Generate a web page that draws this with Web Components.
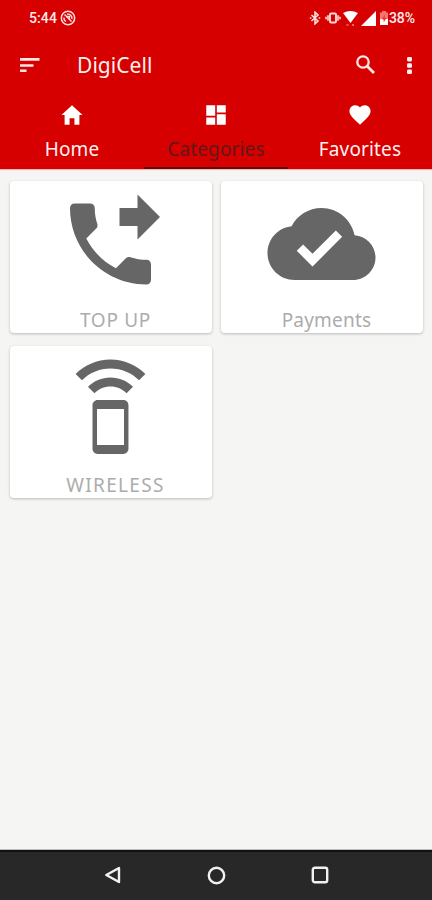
<!DOCTYPE html>
<html lang="en"><head><meta charset="utf-8"><title>DigiCell</title>
<style>html,body{margin:0;height:100%;overflow:hidden}body{font-family:"Noto Sans","Open Sans",sans-serif}</style></head>
<body><digi-app></digi-app>
<script>
const define = (name, html) => {
  const t = document.createElement('template');
  t.innerHTML = html;
  customElements.define(name, class extends HTMLElement {
    constructor() { super(); this.attachShadow({mode: 'open'}).append(t.content.cloneNode(true)); }
  });
};

define('status-bar', `<style>
:host{display:flex;height:36px;box-sizing:border-box;padding:0 16px 0 29px;align-items:center;color:#ffeceb;font:500 14px Roboto,sans-serif}
svg{display:block;flex:none}.time{width:29px;white-space:nowrap;letter-spacing:.1px}
.right{margin-left:auto;display:flex;align-items:center}.pct{width:27px;white-space:nowrap;letter-spacing:-.1px}
</style><span class="time">5:44</span>
<svg style="margin-left:2px" width="16" height="16" viewBox="0 0 16 16" fill="none" stroke="#ffdedb"><circle cx="8" cy="8" r="6.700" stroke-width="1.500"/><path d="M4.500 4.500l7 7M6 11.500a4 4 0 0 1-2-4M7 4.200a4 4 0 0 1 4.800 4.800" stroke-width="1.400"/><path d="M6.500 6.500h3v3" stroke-width="1.300"/></svg>
<div class="right">
<svg width="12" height="14" viewBox="0 0 12 14" fill="none" stroke="#ffe2e0" stroke-width="1.600"><path d="M2.500 4l6.500 6-3 2.800V1.200L9 4l-6.500 6"/><path d="M.8 7h1.600M9.600 7h1.600"/></svg>
<svg style="margin-left:4px" width="16" height="14" viewBox="0 0 16 14" fill="none" stroke="#ffd9d6" stroke-width="1.900"><rect x="5" y="2.500" width="6" height="9" rx="1"/><path d="M3 4.200v5.600M13 4.200v5.600M1 5.700v2.600M15 5.700v2.600" stroke-width="1.600"/></svg>
<svg style="margin-left:2px" width="15" height="17" viewBox="0 0 15 17"><path d="M0 3Q7.500-1 15 3L7.500 13z" fill="#fff"/><path d="M3.500 14l2 2M5.500 14l-2 2M9 14l2 2M11 14l-2 2" stroke="#ff6b62" stroke-width=".9"/></svg>
<svg style="margin-left:3px" width="15" height="15" viewBox="0 0 15 15"><path d="M15 0v15H0z" fill="#fff"/></svg>
<svg style="margin-left:4px" width="8" height="14" viewBox="0 0 8 14"><path d="M2 0h4v1.500h2V14H0V1.500h2z" fill="#f5766f"/><path d="M0 8h8v6H0z" fill="#fff"/><path d="M4.700 3.500L2 8.500h1.700v3L6.300 7H4.700z" fill="#e9342e"/></svg>
<span class="pct" style="margin-left:1px">38%</span></div>`);

define('app-toolbar', `<style>
:host{display:grid;grid-template-columns:57px 1fr 20px 36px;height:58px;box-sizing:border-box;padding:0 20px;align-items:center;color:#fff0ef}
svg{display:block}h1{margin:0;font-size:21px;line-height:30px;font-weight:400;letter-spacing:.05px}.more{margin-left:31px}
.search{margin-top:-2px}
</style>
<svg width="20" height="15" viewBox="0 0 20 15" fill="#ffe6e4"><path d="M0 0h19.500v2.800H0zM0 6.300h13.500v2.400H0zM0 11.600h6.500V14H0z"/></svg>
<h1>DigiCell</h1>
<svg class="search" width="19" height="19" viewBox="0 0 19 19" fill="none" stroke="#ffe6e4"><circle cx="7" cy="7" r="5.700" stroke-width="2.300"/><path d="M11 11l7 7" stroke-width="2.800"/></svg>
<svg class="more" width="5" height="17" viewBox="0 0 5 17" fill="#ffefee"><rect width="5" height="4.400" rx="1.300"/><rect y="6.300" width="5" height="4.400" rx="1.300"/><rect y="12.600" width="5" height="4.400" rx="1.300"/></svg>`);

define('tab-item', `<style>
:host{display:flex;flex-direction:column;align-items:center;box-sizing:border-box;height:75px;padding-top:8px;color:#fff0ef;border-bottom:2px solid transparent}
:host([active]){color:#651717;border-bottom-color:#620909}
span{font-size:19px;line-height:26px;margin-top:8px;white-space:nowrap;letter-spacing:.15px}
::slotted(svg){display:block;width:26px;height:26px;fill:#fff}
</style><slot name="icon"></slot><span><slot></slot></span>`);

define('tab-bar', `<style>:host{display:grid;grid-template-columns:repeat(3,1fr)}</style><slot></slot>`);

define('category-card', `<style>
:host{display:flex;flex-direction:column;align-items:center;box-sizing:border-box;height:152px;padding-top:8.500px;background:#fff;border-radius:4px;box-shadow:0 1px 3px rgba(0,0,0,.24);color:#acacac}
::slotted(svg){display:block;width:109px;height:109px;fill:#666;margin-right:1px}
span{font-size:19px;line-height:26px;margin-top:9.500px;margin-left:9px;letter-spacing:var(--track,0)}
</style><slot name="icon"></slot><span><slot></slot></span>`);

define('nav-bar', `<style>
:host{display:flex;height:50px;box-sizing:border-box;border-top:2px solid #111;background:#282828;box-shadow:0 -1px #bdbdbd;justify-content:space-between;align-items:center;padding:0 103px 2px 104px}
svg{display:block;fill:none;stroke:#f1f1f1;stroke-width:2.400}
</style>
<svg width="18" height="18" viewBox="0 0 18 18"><path d="M15 2v14L2.300 9z" stroke-linejoin="round"/></svg>
<svg width="19" height="19" viewBox="0 0 19 19"><circle cx="9.500" cy="9.500" r="7.700"/></svg>
<svg width="18" height="18" viewBox="0 0 18 18"><rect x="1.800" y="1.800" width="14.400" height="14.400" rx="2"/></svg>`);

define('digi-app', `<style>
:host{display:flex;flex-direction:column;height:900px;width:432px;background:#f5f5f3}
header{background:#d60000;height:169px;flex:none;box-shadow:0 1px 1px #f5b5b5}
main{flex:1;display:grid;grid-template-columns:202px 202px;grid-auto-rows:152px;gap:13px 9px;padding:12px 10px}
</style>
<header><status-bar></status-bar><app-toolbar></app-toolbar>
<tab-bar>
<tab-item><svg slot="icon" viewBox="0 0 512 512"><path d="M208 448V320h96v128h97.600V256H464L256 64 48 256h62.400v192z"/></svg>Home</tab-item>
<tab-item active><svg slot="icon" viewBox="0 0 512 512"><path d="M64 272h176V64H64zM64 448h176V304H64zM272 448h176V240H272zM272 64v144h176V64z"/></svg>Categories</tab-item>
<tab-item><svg slot="icon" viewBox="0 0 512 512"><path d="M256 448l-30.164-27.211C118.718 322.442 48 258.610 48 179.095 48 114.221 97.918 64 162.400 64c36.399 0 70.717 16.742 93.600 43.947C278.882 80.742 313.199 64 349.600 64 414.082 64 464 114.221 464 179.095c0 79.516-70.719 143.348-177.836 241.694L256 448z"/></svg>Favorites</tab-item>
</tab-bar></header>
<main>
<category-card style="--track:.7px"><svg slot="icon" viewBox="0 0 24 24"><path d="M18 11l5-5-5-5v3h-4v4h4v3zm2 4.500c-1.250 0-2.450-.2-3.570-.57-.35-.11-.74-.03-1.020.24l-2.200 2.200c-2.830-1.440-5.150-3.750-6.590-6.590l2.200-2.210c.28-.26.36-.65.25-1C8.700 6.450 8.500 5.250 8.500 4c0-.55-.45-1-1-1H4c-.55 0-1 .45-1 1 0 9.390 7.610 17 17 17 .55 0 1-.45 1-1v-3.500c0-.55-.45-1-1-1z"/></svg>TOP UP</category-card>
<category-card style="--track:.2px"><svg slot="icon" viewBox="0 0 24 24"><path d="M19.350 10.040C18.670 6.590 15.640 4 12 4 9.110 4 6.600 5.640 5.350 8.040 2.340 8.360 0 10.910 0 14c0 3.310 2.690 6 6 6h13c2.760 0 5-2.240 5-5 0-2.640-2.050-4.780-4.650-4.960zM10 17l-3.500-3.500 1.410-1.410L10 14.170 15.180 9l1.410 1.410L10 17z"/></svg>Payments</category-card>
<category-card style="--track:1.3px"><svg slot="icon" viewBox="0 0 24 24"><path d="M7 7.070L8.430 8.500c.91-.91 2.180-1.500 3.570-1.500s2.660.59 3.570 1.500L17 7.070C15.720 5.790 13.950 5 12 5s-3.720.79-5 2.070zM12 1C8.980 1 6.240 2.230 4.250 4.210l1.410 1.410C7.280 4 9.530 3 12 3s4.720 1 6.340 2.620l1.410-1.410C17.760 2.230 15.020 1 12 1zm2.860 9.010L9.140 10C8.510 10 8 10.510 8 11.140v9.710c0 .63.51 1.140 1.140 1.140h5.710c.63 0 1.140-.51 1.140-1.140v-9.710c.01-.63-.5-1.130-1.130-1.130zM15 20H9v-8h6v8z"/></svg>WIRELESS</category-card>
</main>
<nav-bar></nav-bar>`);
</script></body></html>
